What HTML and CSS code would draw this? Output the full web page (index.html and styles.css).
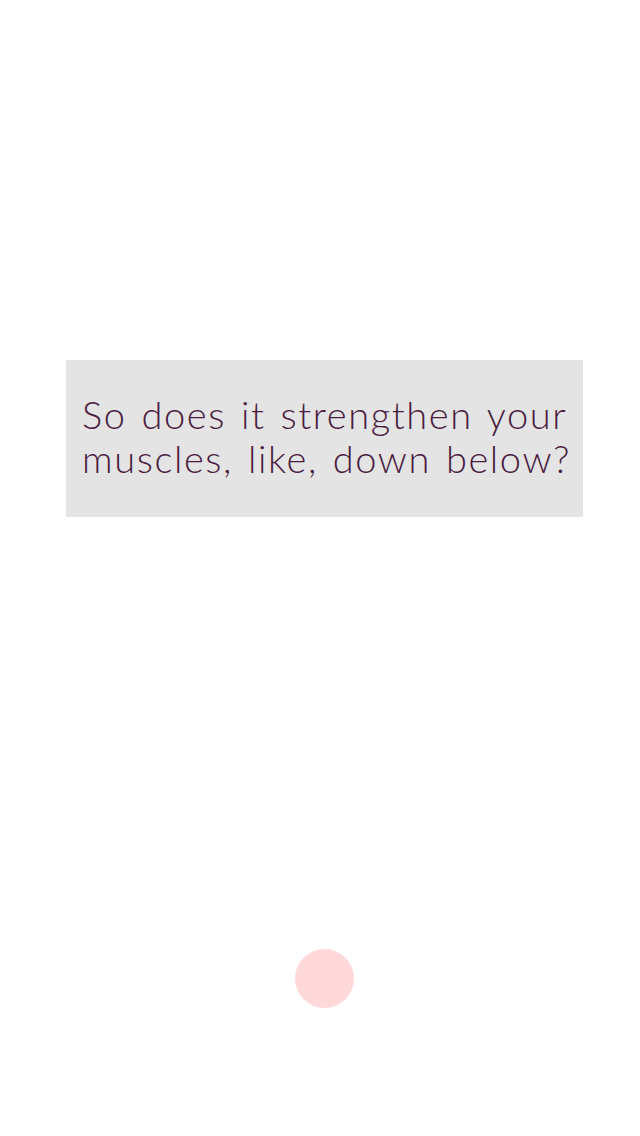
FILE: index.html
```html
<!DOCTYPE html>
<html>
<head>
<meta charset="utf-8">
<link rel="stylesheet" href="styles.css">
</head>
<body>
<main class="screen">
  <section class="card">
    <p class="quote"><span class="line">So does it strengthen your</span> <span class="line">muscles, like, down below?</span></p>
  </section>
  <div class="dot-row"><span class="dot"></span></div>
</main>
</body>
</html>
```
FILE: styles.css
```css
html, body { margin: 0; padding: 0; background: #fff; }
.screen {
  width: 640px;
  height: 1136px;
  display: flex;
  flex-direction: column;
  padding-top: 360px;
  box-sizing: border-box;
}
.card {
  margin-left: 66px;
  width: 517px;
  height: 157px;
  background: #e4e4e4;
  box-sizing: border-box;
  padding: 32px 0 0 16px;
  overflow: hidden;
}
.quote {
  margin: 0;
  font-family: "Lato", sans-serif;
  font-weight: 300;
  font-size: 38px;
  line-height: 44px;
  letter-spacing: 1.6px;
  word-spacing: 3px;
  color: #4a1c40;
}
.line {
  display: block;
  white-space: nowrap;
}
.dot-row {
  margin-top: 432px;
  display: flex;
  justify-content: center;
  padding-left: 8px;
}
.dot {
  width: 59px;
  height: 59px;
  border-radius: 50%;
  background: #ffd9d9;
}
```
